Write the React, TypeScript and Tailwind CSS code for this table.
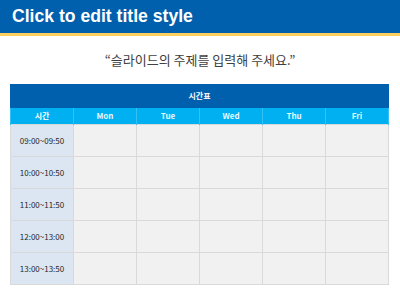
const days = ["Mon", "Tue", "Wed", "Thu", "Fri"];
const slots = ["09:00~09:50", "10:00~10:50", "11:00~11:50", "12:00~13:00", "13:00~13:50"];

const App = () => {
  return (
    <div className="h-[300px] w-[400px] overflow-hidden bg-white font-['Noto_Sans_CJK_KR',sans-serif]">
      <header className="h-[33px] bg-[#0060ad] pl-[12px]">
        <h1 className="font-['Liberation_Sans',sans-serif] text-[17.6px] font-bold leading-[33px] text-white">
          Click to edit title style
        </h1>
      </header>
      <div className="h-[3px] bg-[#fcd05e]" />

      <p className="mt-[15px] text-center text-[13px] leading-[18px] text-[#404040]">
        “슬라이드의 주제를 입력해 주세요.”
      </p>

      <table className="mt-[15px] ml-[10px] w-[379px] table-fixed border-collapse text-[8px]">
        <thead>
          <tr className="h-[23px] bg-[#0060ad]">
            <th colSpan={6} className="border border-[#0060ad] font-bold text-white">
              시간표
            </th>
          </tr>
          <tr className="h-[17px] bg-[#00b0f0]">
            <th className="border-x border-[#33c0f2] font-bold text-white">시간</th>
            {days.map((d) => (
              <th key={d} className="border-x border-[#33c0f2] font-semibold text-[#e8f8ff]">
                {d}
              </th>
            ))}
          </tr>
        </thead>
        <tbody>
          {slots.map((s) => (
            <tr key={s} className="h-[32px]">
              <td className="border border-[#d9d9d9] bg-[#dce6f2] text-center text-[#262626]">{s}</td>
              {days.map((d) => (
                <td key={d} className="border border-[#d9d9d9] bg-[#f1f1f1]" />
              ))}
            </tr>
          ))}
        </tbody>
      </table>
    </div>
  );
};

export default App;
